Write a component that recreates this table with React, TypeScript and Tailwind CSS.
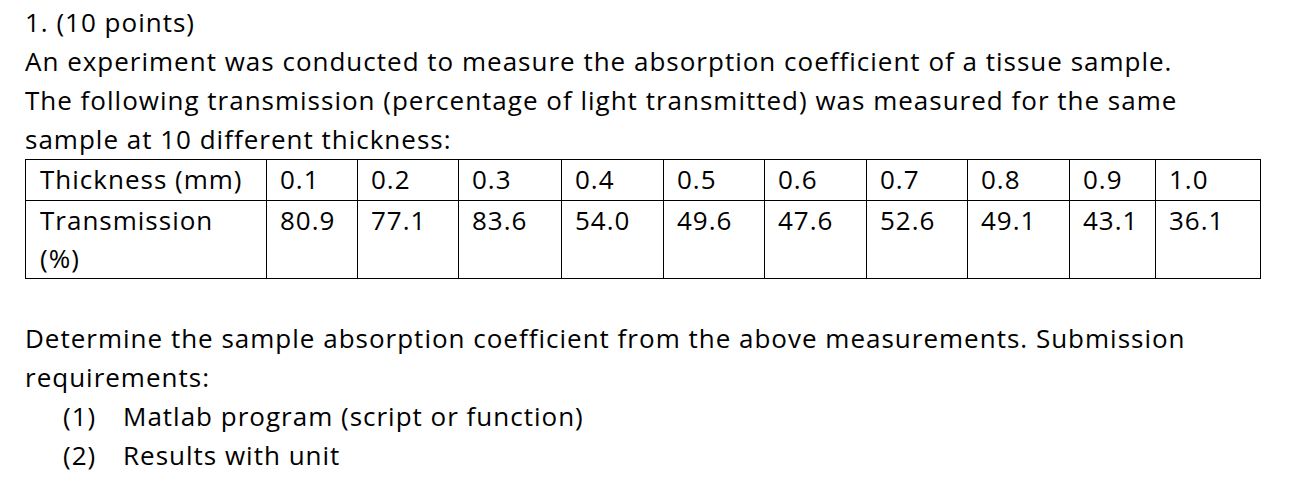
const thickness = ["0.1", "0.2", "0.3", "0.4", "0.5", "0.6", "0.7", "0.8", "0.9", "1.0"];
const transmission = ["80.9", "77.1", "83.6", "54.0", "49.6", "47.6", "52.6", "49.1", "43.1", "36.1"];
const colWidths = ["w-[91px]", "w-[101px]", "w-[103px]", "w-[102px]", "w-[101px]", "w-[102px]", "w-[101px]", "w-[102px]", "w-[86px]", "w-[105px]"];

export default function App() {
  return (
    <main className="w-[1315px] h-[496px] bg-white text-black pl-[25px] pt-[3px] font-['Open_Sans','Liberation_Sans',sans-serif] text-[26px] leading-[39px] tracking-[1px]">
      <p>1. (10 points)</p>
      <p>An experiment was conducted to measure the absorption coefficient of a tissue sample.</p>
      <p>The following transmission (percentage of light transmitted) was measured for the same</p>
      <p>sample at 10 different thickness:</p>

      <table className="table-fixed border-collapse w-[1236px] leading-[38px]">
        <colgroup>
          <col className="w-[241px]" />
          {colWidths.map((w, i) => (
            <col key={i} className={w} />
          ))}
        </colgroup>
        <tbody>
          <tr className="h-[41px]">
            <td className="border border-black align-top pl-[14px]">Thickness (mm)</td>
            {thickness.map((t) => (
              <td key={t} className="border border-black align-top pl-[13px]">
                {t}
              </td>
            ))}
          </tr>
          <tr className="h-[78px]">
            <td className="border border-black align-top pl-[14px]">
              Transmission
              <br />
              (%)
            </td>
            {transmission.map((t, i) => (
              <td key={i} className="border border-black align-top pl-[13px]">
                {t}
              </td>
            ))}
          </tr>
        </tbody>
      </table>

      <div className="mt-[40px]">
        <p>Determine the sample absorption coefficient from the above measurements. Submission</p>
        <p>requirements:</p>
        <ol className="pl-[38px]">
          <li className="flex">
            <span className="w-[60px]">(1)</span>
            <span>Matlab program (script or function)</span>
          </li>
          <li className="flex">
            <span className="w-[60px]">(2)</span>
            <span>Results with unit</span>
          </li>
        </ol>
      </div>
    </main>
  );
}
